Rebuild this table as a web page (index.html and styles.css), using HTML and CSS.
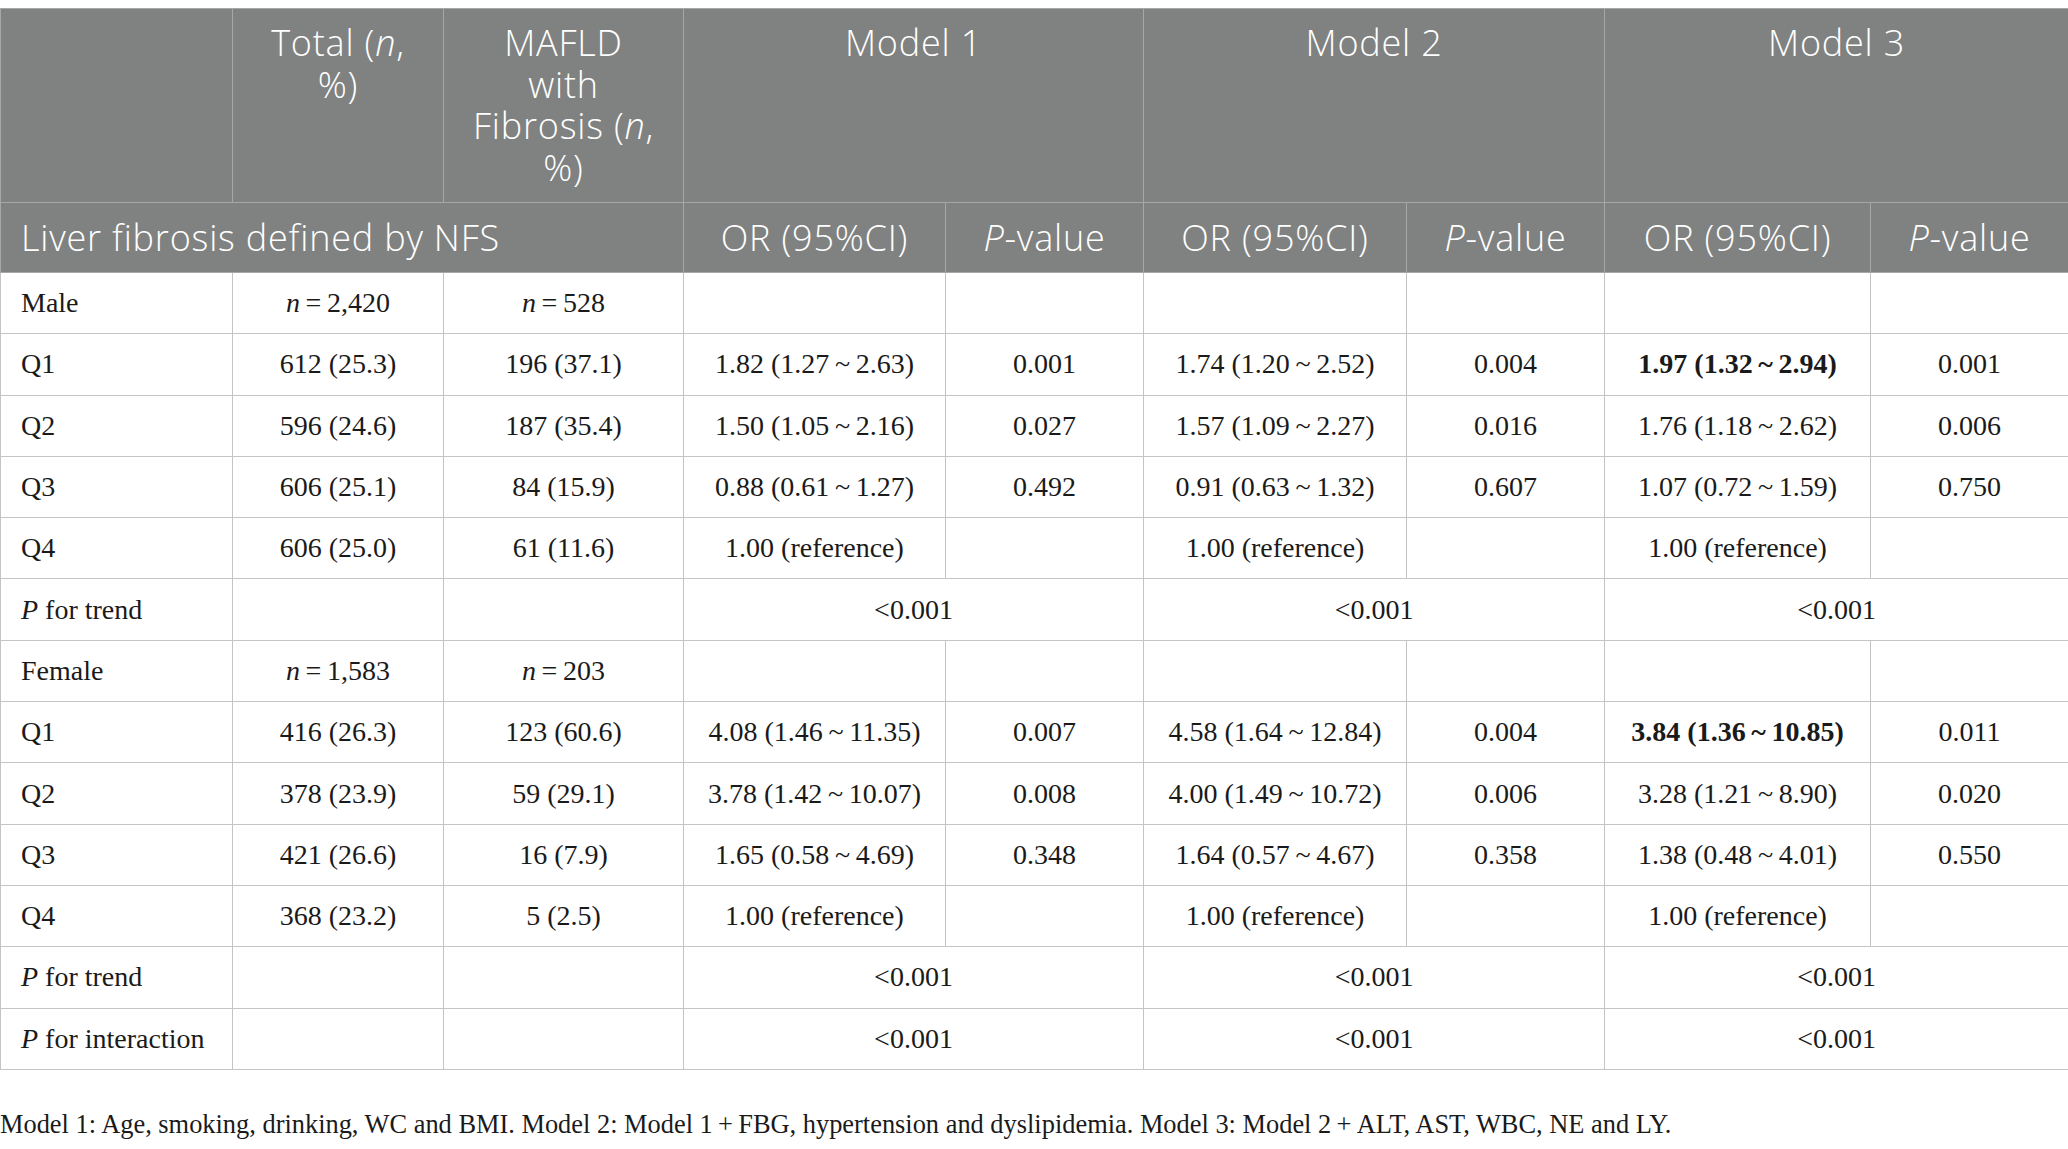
FILE: index.html
```html
<!DOCTYPE html>
<html lang="en">
<head>
<meta charset="utf-8">
<title>Table</title>
<link rel="stylesheet" href="styles.css">
</head>
<body>
<table class="data">
  <colgroup>
    <col class="c-label"><col class="c-total"><col class="c-mafld">
    <col class="c-or1"><col class="c-p1"><col class="c-or2"><col class="c-p2"><col class="c-or3"><col class="c-p3">
  </colgroup>
  <thead>
    <tr class="head-top">
      <th></th>
      <th>Total (<i>n</i>,<br>%)</th>
      <th>MAFLD<br>with<br>Fibrosis (<i>n</i>,<br>%)</th>
      <th colspan="2">Model 1</th>
      <th colspan="2">Model 2</th>
      <th colspan="2">Model 3</th>
    </tr>
    <tr class="head-sub">
      <th colspan="3" class="left">Liver fibrosis defined by NFS</th>
      <th>OR (95%CI)</th>
      <th><i>P</i>-value</th>
      <th>OR (95%CI)</th>
      <th><i>P</i>-value</th>
      <th>OR (95%CI)</th>
      <th><i>P</i>-value</th>
    </tr>
  </thead>
  <tbody>
    <tr><td class="left">Male</td><td><i>n</i>&#8201;=&#8201;2,420</td><td><i>n</i>&#8201;=&#8201;528</td><td></td><td></td><td></td><td></td><td></td><td></td></tr>
    <tr><td class="left">Q1</td><td>612 (25.3)</td><td>196 (37.1)</td><td>1.82 (1.27&#8201;~&#8201;2.63)</td><td>0.001</td><td>1.74 (1.20&#8201;~&#8201;2.52)</td><td>0.004</td><td><b>1.97 (1.32&#8201;~&#8201;2.94)</b></td><td>0.001</td></tr>
    <tr><td class="left">Q2</td><td>596 (24.6)</td><td>187 (35.4)</td><td>1.50 (1.05&#8201;~&#8201;2.16)</td><td>0.027</td><td>1.57 (1.09&#8201;~&#8201;2.27)</td><td>0.016</td><td>1.76 (1.18&#8201;~&#8201;2.62)</td><td>0.006</td></tr>
    <tr><td class="left">Q3</td><td>606 (25.1)</td><td>84 (15.9)</td><td>0.88 (0.61&#8201;~&#8201;1.27)</td><td>0.492</td><td>0.91 (0.63&#8201;~&#8201;1.32)</td><td>0.607</td><td>1.07 (0.72&#8201;~&#8201;1.59)</td><td>0.750</td></tr>
    <tr><td class="left">Q4</td><td>606 (25.0)</td><td>61 (11.6)</td><td>1.00 (reference)</td><td></td><td>1.00 (reference)</td><td></td><td>1.00 (reference)</td><td></td></tr>
    <tr><td class="left"><i>P</i> for trend</td><td></td><td></td><td colspan="2">&lt;0.001</td><td colspan="2">&lt;0.001</td><td colspan="2">&lt;0.001</td></tr>
    <tr><td class="left">Female</td><td><i>n</i>&#8201;=&#8201;1,583</td><td><i>n</i>&#8201;=&#8201;203</td><td></td><td></td><td></td><td></td><td></td><td></td></tr>
    <tr><td class="left">Q1</td><td>416 (26.3)</td><td>123 (60.6)</td><td>4.08 (1.46&#8201;~&#8201;11.35)</td><td>0.007</td><td>4.58 (1.64&#8201;~&#8201;12.84)</td><td>0.004</td><td><b>3.84 (1.36&#8201;~&#8201;10.85)</b></td><td>0.011</td></tr>
    <tr><td class="left">Q2</td><td>378 (23.9)</td><td>59 (29.1)</td><td>3.78 (1.42&#8201;~&#8201;10.07)</td><td>0.008</td><td>4.00 (1.49&#8201;~&#8201;10.72)</td><td>0.006</td><td>3.28 (1.21&#8201;~&#8201;8.90)</td><td>0.020</td></tr>
    <tr><td class="left">Q3</td><td>421 (26.6)</td><td>16 (7.9)</td><td>1.65 (0.58&#8201;~&#8201;4.69)</td><td>0.348</td><td>1.64 (0.57&#8201;~&#8201;4.67)</td><td>0.358</td><td>1.38 (0.48&#8201;~&#8201;4.01)</td><td>0.550</td></tr>
    <tr><td class="left">Q4</td><td>368 (23.2)</td><td>5 (2.5)</td><td>1.00 (reference)</td><td></td><td>1.00 (reference)</td><td></td><td>1.00 (reference)</td><td></td></tr>
    <tr><td class="left"><i>P</i> for trend</td><td></td><td></td><td colspan="2">&lt;0.001</td><td colspan="2">&lt;0.001</td><td colspan="2">&lt;0.001</td></tr>
    <tr><td class="left"><i>P</i> for interaction</td><td></td><td></td><td colspan="2">&lt;0.001</td><td colspan="2">&lt;0.001</td><td colspan="2">&lt;0.001</td></tr>
  </tbody>
</table>
<p class="note">Model 1: Age, smoking, drinking, WC and BMI. Model 2: Model 1&#8201;+&#8201;FBG, hypertension and dyslipidemia. Model 3: Model 2&#8201;+&#8201;ALT, AST, WBC, NE and LY.</p>
</body>
</html>
```
FILE: styles.css
```css
html, body {
  margin: 0;
  padding: 0;
  background: #ffffff;
  overflow: hidden;
}
body {
  padding-top: 8px;
  font-family: "Liberation Serif", "Times New Roman", serif;
  color: #1a1a1a;
}
.data {
  width: 2068px;
  border-collapse: collapse;
  table-layout: fixed;
}
.c-label { width: 232px; }
.c-total { width: 211px; }
.c-mafld { width: 240px; }
.c-or1 { width: 262px; }
.c-p1 { width: 198px; }
.c-or2 { width: 263px; }
.c-p2 { width: 198px; }
.c-or3 { width: 266px; }
.c-p3 { width: 198px; }

.data th {
  background: #808281;
  color: #ffffff;
  font-family: "Open Sans", "Noto Sans", sans-serif;
  font-weight: 300;
  font-size: 36px;
  letter-spacing: 0.8px;
  line-height: 41.5px;
  border: 1px solid #a6a7a6;
  text-align: center;
  padding: 0 8px;
  white-space: nowrap;
}
.head-top th {
  vertical-align: top;
  height: 167px;
  padding-top: 13px;
  padding-bottom: 13px;
}
.head-sub th {
  height: 69px;
  vertical-align: middle;
  padding-top: 0;
  padding-bottom: 0;
}
.data th.left {
  text-align: left;
  padding-left: 20px;
}
.data td {
  border: 1px solid #c4c4c4;
  font-size: 28px;
  height: 60.3px;
  padding: 0 10px;
  text-align: center;
  vertical-align: middle;
  white-space: nowrap;
}
.data td.left {
  text-align: left;
  padding-left: 20px;
}
.data b { font-weight: 700; }
.note {
  margin: 0;
  padding-top: 39px;
  font-size: 26.4px;
  line-height: 30px;
  color: #1a1a1a;
}
```
